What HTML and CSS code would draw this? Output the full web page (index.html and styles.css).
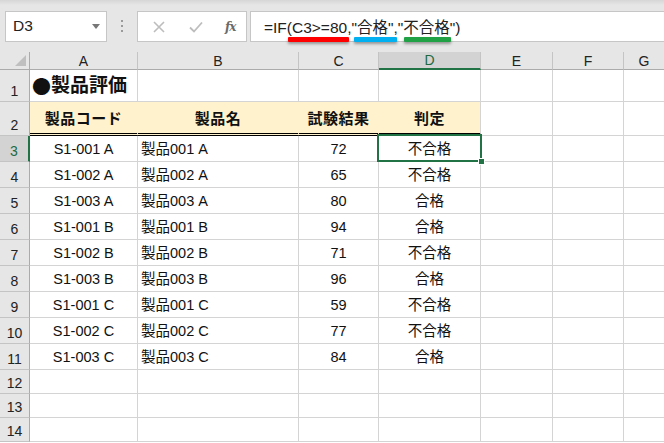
FILE: index.html
```html
<!DOCTYPE html>
<html lang="ja">
<head>
<meta charset="utf-8">
<title>Excel IF</title>
<link rel="stylesheet" href="styles.css">
</head>
<body>
<div class="app">
  <div class="toolbar">
    <div class="namebox">
      <span class="name">D3</span>
      <svg class="drop" width="8" height="5" viewBox="0 0 8 5"><path d="M0 0H8L4 5Z" fill="#777"/></svg>
    </div>
    <div class="sep">
      <svg width="3" height="13" viewBox="0 0 3 13"><rect x="0" y="0" width="2" height="2" fill="#9a9a9a"/><rect x="0" y="5" width="2" height="2" fill="#9a9a9a"/><rect x="0" y="10" width="2" height="2" fill="#9a9a9a"/></svg>
    </div>
    <div class="fxbox">
      <svg class="ico" width="12" height="12" viewBox="0 0 12 12"><path d="M1 1L11 11M11 1L1 11" stroke="#bdbdbd" stroke-width="1.6"/></svg>
      <svg class="ico" width="14" height="12" viewBox="0 0 14 12"><path d="M1 6.5L5 10.5L13 1.5" stroke="#bdbdbd" stroke-width="1.8" fill="none"/></svg>
      <span class="fx">fx</span>
    </div>
    <div class="formula">=IF(C3&gt;=80,"合格","不合格")</div>
    <span class="bar bar-red"></span>
    <span class="bar bar-blue"></span>
    <span class="bar bar-green"></span>
  </div>

  <div class="sheet">
    <div class="ch corner"><span class="tri"></span></div>
    <div class="ch">A</div>
    <div class="ch">B</div>
    <div class="ch">C</div>
    <div class="ch sel">D</div>
    <div class="ch">E</div>
    <div class="ch">F</div>
    <div class="ch last">G</div>

    <div class="rh r1">1</div>
    <div class="c r1 title"><span class="dot">●</span>製品評価</div>
    <div class="c r1"></div>
    <div class="c r1"></div>
    <div class="c r1"></div>
    <div class="c r1"></div>
    <div class="c r1"></div>
    <div class="c r1"></div>

    <div class="rh r2">2</div>
    <div class="c r2 hd ctr">製品コード</div>
    <div class="c r2 hd ctr">製品名</div>
    <div class="c r2 hd ctr">試験結果</div>
    <div class="c r2 hd ctr hd-last">判定</div>
    <div class="c r2"></div>
    <div class="c r2"></div>
    <div class="c r2"></div>

    <div class="rh rsel">3</div>
    <div class="c ctr">S1-001 A</div>
    <div class="c">製品001 A</div>
    <div class="c ctr">72</div>
    <div class="c ctr active">不合格<span class="handle"></span></div>
    <div class="c"></div>
    <div class="c"></div>
    <div class="c"></div>

    <div class="rh">4</div>
    <div class="c ctr">S1-002 A</div>
    <div class="c">製品002 A</div>
    <div class="c ctr">65</div>
    <div class="c ctr">不合格</div>
    <div class="c"></div>
    <div class="c"></div>
    <div class="c"></div>

    <div class="rh">5</div>
    <div class="c ctr">S1-003 A</div>
    <div class="c">製品003 A</div>
    <div class="c ctr">80</div>
    <div class="c ctr">合格</div>
    <div class="c"></div>
    <div class="c"></div>
    <div class="c"></div>

    <div class="rh">6</div>
    <div class="c ctr">S1-001 B</div>
    <div class="c">製品001 B</div>
    <div class="c ctr">94</div>
    <div class="c ctr">合格</div>
    <div class="c"></div>
    <div class="c"></div>
    <div class="c"></div>

    <div class="rh">7</div>
    <div class="c ctr">S1-002 B</div>
    <div class="c">製品002 B</div>
    <div class="c ctr">71</div>
    <div class="c ctr">不合格</div>
    <div class="c"></div>
    <div class="c"></div>
    <div class="c"></div>

    <div class="rh">8</div>
    <div class="c ctr">S1-003 B</div>
    <div class="c">製品003 B</div>
    <div class="c ctr">96</div>
    <div class="c ctr">合格</div>
    <div class="c"></div>
    <div class="c"></div>
    <div class="c"></div>

    <div class="rh">9</div>
    <div class="c ctr">S1-001 C</div>
    <div class="c">製品001 C</div>
    <div class="c ctr">59</div>
    <div class="c ctr">不合格</div>
    <div class="c"></div>
    <div class="c"></div>
    <div class="c"></div>

    <div class="rh">10</div>
    <div class="c ctr">S1-002 C</div>
    <div class="c">製品002 C</div>
    <div class="c ctr">77</div>
    <div class="c ctr">不合格</div>
    <div class="c"></div>
    <div class="c"></div>
    <div class="c"></div>

    <div class="rh">11</div>
    <div class="c ctr">S1-003 C</div>
    <div class="c">製品003 C</div>
    <div class="c ctr">84</div>
    <div class="c ctr">合格</div>
    <div class="c"></div>
    <div class="c"></div>
    <div class="c"></div>

    <div class="rh">12</div>
    <div class="c"></div><div class="c"></div><div class="c"></div><div class="c"></div><div class="c"></div><div class="c"></div><div class="c"></div>
    <div class="rh">13</div>
    <div class="c"></div><div class="c"></div><div class="c"></div><div class="c"></div><div class="c"></div><div class="c"></div><div class="c"></div>
    <div class="rh">14</div>
    <div class="c"></div><div class="c"></div><div class="c"></div><div class="c"></div><div class="c"></div><div class="c"></div><div class="c"></div>
  </div>
</div>
</body>
</html>
```

FILE: styles.css
```css
* { box-sizing: border-box; }
html, body { margin: 0; padding: 0; }
body {
  width: 664px;
  height: 443px;
  overflow: hidden;
  background: #fff;
  font-family: "Liberation Sans", "Noto Sans CJK JP", sans-serif;
  color: #000;
}
.app { width: 664px; height: 443px; overflow: hidden; }

.toolbar {
  position: relative;
  height: 52px;
  background: linear-gradient(#d6d6d6 0px, #e6e6e6 5px, #e6e6e6 100%);
  display: flex;
  align-items: flex-start;
  padding: 11px 0 0 5px;
}
.namebox {
  width: 102px;
  height: 31px;
  background: #fff;
  border: 1px solid #c6c6c6;
  display: flex;
  align-items: center;
  justify-content: space-between;
  padding: 0 6px 1px 7px;
}
.name { font-size: 15.5px; color: #222; }
.drop { margin-top: 1px; }
.sep {
  width: 30px;
  height: 31px;
  display: flex;
  align-items: center;
  justify-content: center;
  padding-left: 1px;
}
.fxbox {
  width: 110px;
  height: 31px;
  background: #fff;
  border: 1px solid #c6c6c6;
  display: flex;
  align-items: center;
  padding: 0 0 0 15px;
}
.fxbox .ico:nth-child(1) { margin-right: 24px; }
.fxbox .ico:nth-child(2) { margin-right: 22px; }
.fx {
  font-family: "DejaVu Serif", "Liberation Serif", serif;
  font-style: italic;
  font-weight: bold;
  font-size: 12px;
  color: #6a6a6a;
  letter-spacing: -1px;
}
.formula {
  flex: 1;
  height: 31px;
  margin-left: 3px;
  margin-right: -2px;
  background: #fff;
  border: 1px solid #c6c6c6;
  padding: 3px 0 0 13px;
  font-size: 15.5px;
  color: #222;
  white-space: nowrap;
}
.bar {
  position: absolute;
  top: 37px;
  height: 5px;
  border-radius: 1px;
  box-shadow: 0 2px 3px rgba(0,0,0,0.35);
}
.bar-red { left: 288px; width: 61px; background: #fe0000; }
.bar-blue { left: 354px; width: 43px; background: #00b0f0; }
.bar-green { left: 404px; width: 47px; background: #21a145; }

.sheet {
  display: grid;
  grid-template-columns: 30px 108px 161px 80px 102px 72px 71px 1fr;
  grid-template-rows: 18px 32px 34px repeat(9, 26px) repeat(3, 24px);
  font-size: 14.5px;
}
.ch {
  background: #e6e6e6;
  border-right: 1px solid #c4c4c4;
  border-bottom: 1px solid #ababab;
  display: flex;
  align-items: flex-end;
  justify-content: center;
  font-size: 14px;
  line-height: 16px;
  color: #222;
}
.ch.last { border-right: none; }
.ch.sel {
  background: #d3d3d3;
  color: #1e6b41;
  border-bottom: 2px solid #217346;
}
.corner { position: relative; border-right: 1px solid #ababab; }
.tri {
  position: absolute;
  right: 3px;
  bottom: 3px;
  width: 0;
  height: 0;
  border-left: 11px solid transparent;
  border-bottom: 11px solid #bfbfbf;
}
.rh {
  background: #e6e6e6;
  border-right: 1px solid #ababab;
  border-bottom: 1px solid #c4c4c4;
  display: flex;
  align-items: flex-end;
  justify-content: center;
  font-size: 14px;
  line-height: 16px;
  padding-bottom: 2px;
  color: #222;
}
.rh.rsel {
  background: #d3d3d3;
  color: #1e6b41;
  border-right: 2px solid #217346;
}
.c {
  position: relative;
  border-right: 1px solid #d4d4d4;
  border-bottom: 1px solid #d4d4d4;
  display: flex;
  align-items: flex-end;
  padding: 0 3px 3px 3px;
  line-height: 17px;
  white-space: nowrap;
  color: #111;
}
.c:nth-child(8n) { border-right: none; }
.ctr { justify-content: center; }
.title {
  font-size: 19px;
  font-weight: bold;
  line-height: 22px;
  padding-left: 2px;
  padding-bottom: 4px;
}
.dot {
  font-family: "Noto Sans CJK JP", sans-serif;
  font-weight: bold;
}
.hd {
  background: #fff2cc;
  border-right-color: #fff2cc;
  border-bottom: 3px double #000;
  font-weight: bold;
  font-size: 15px;
  letter-spacing: 0.5px;
  padding-bottom: 6px;
}
.hd-last { border-right-color: #d4d4d4; }
.active::before {
  content: "";
  position: absolute;
  left: -2px;
  top: -2px;
  right: -2px;
  bottom: -1px;
  border: 2px solid #217346;
  pointer-events: none;
}
.handle {
  position: absolute;
  right: -5px;
  bottom: -4px;
  width: 7px;
  height: 7px;
  background: #217346;
  border: 1px solid #fff;
  z-index: 2;
}
```
